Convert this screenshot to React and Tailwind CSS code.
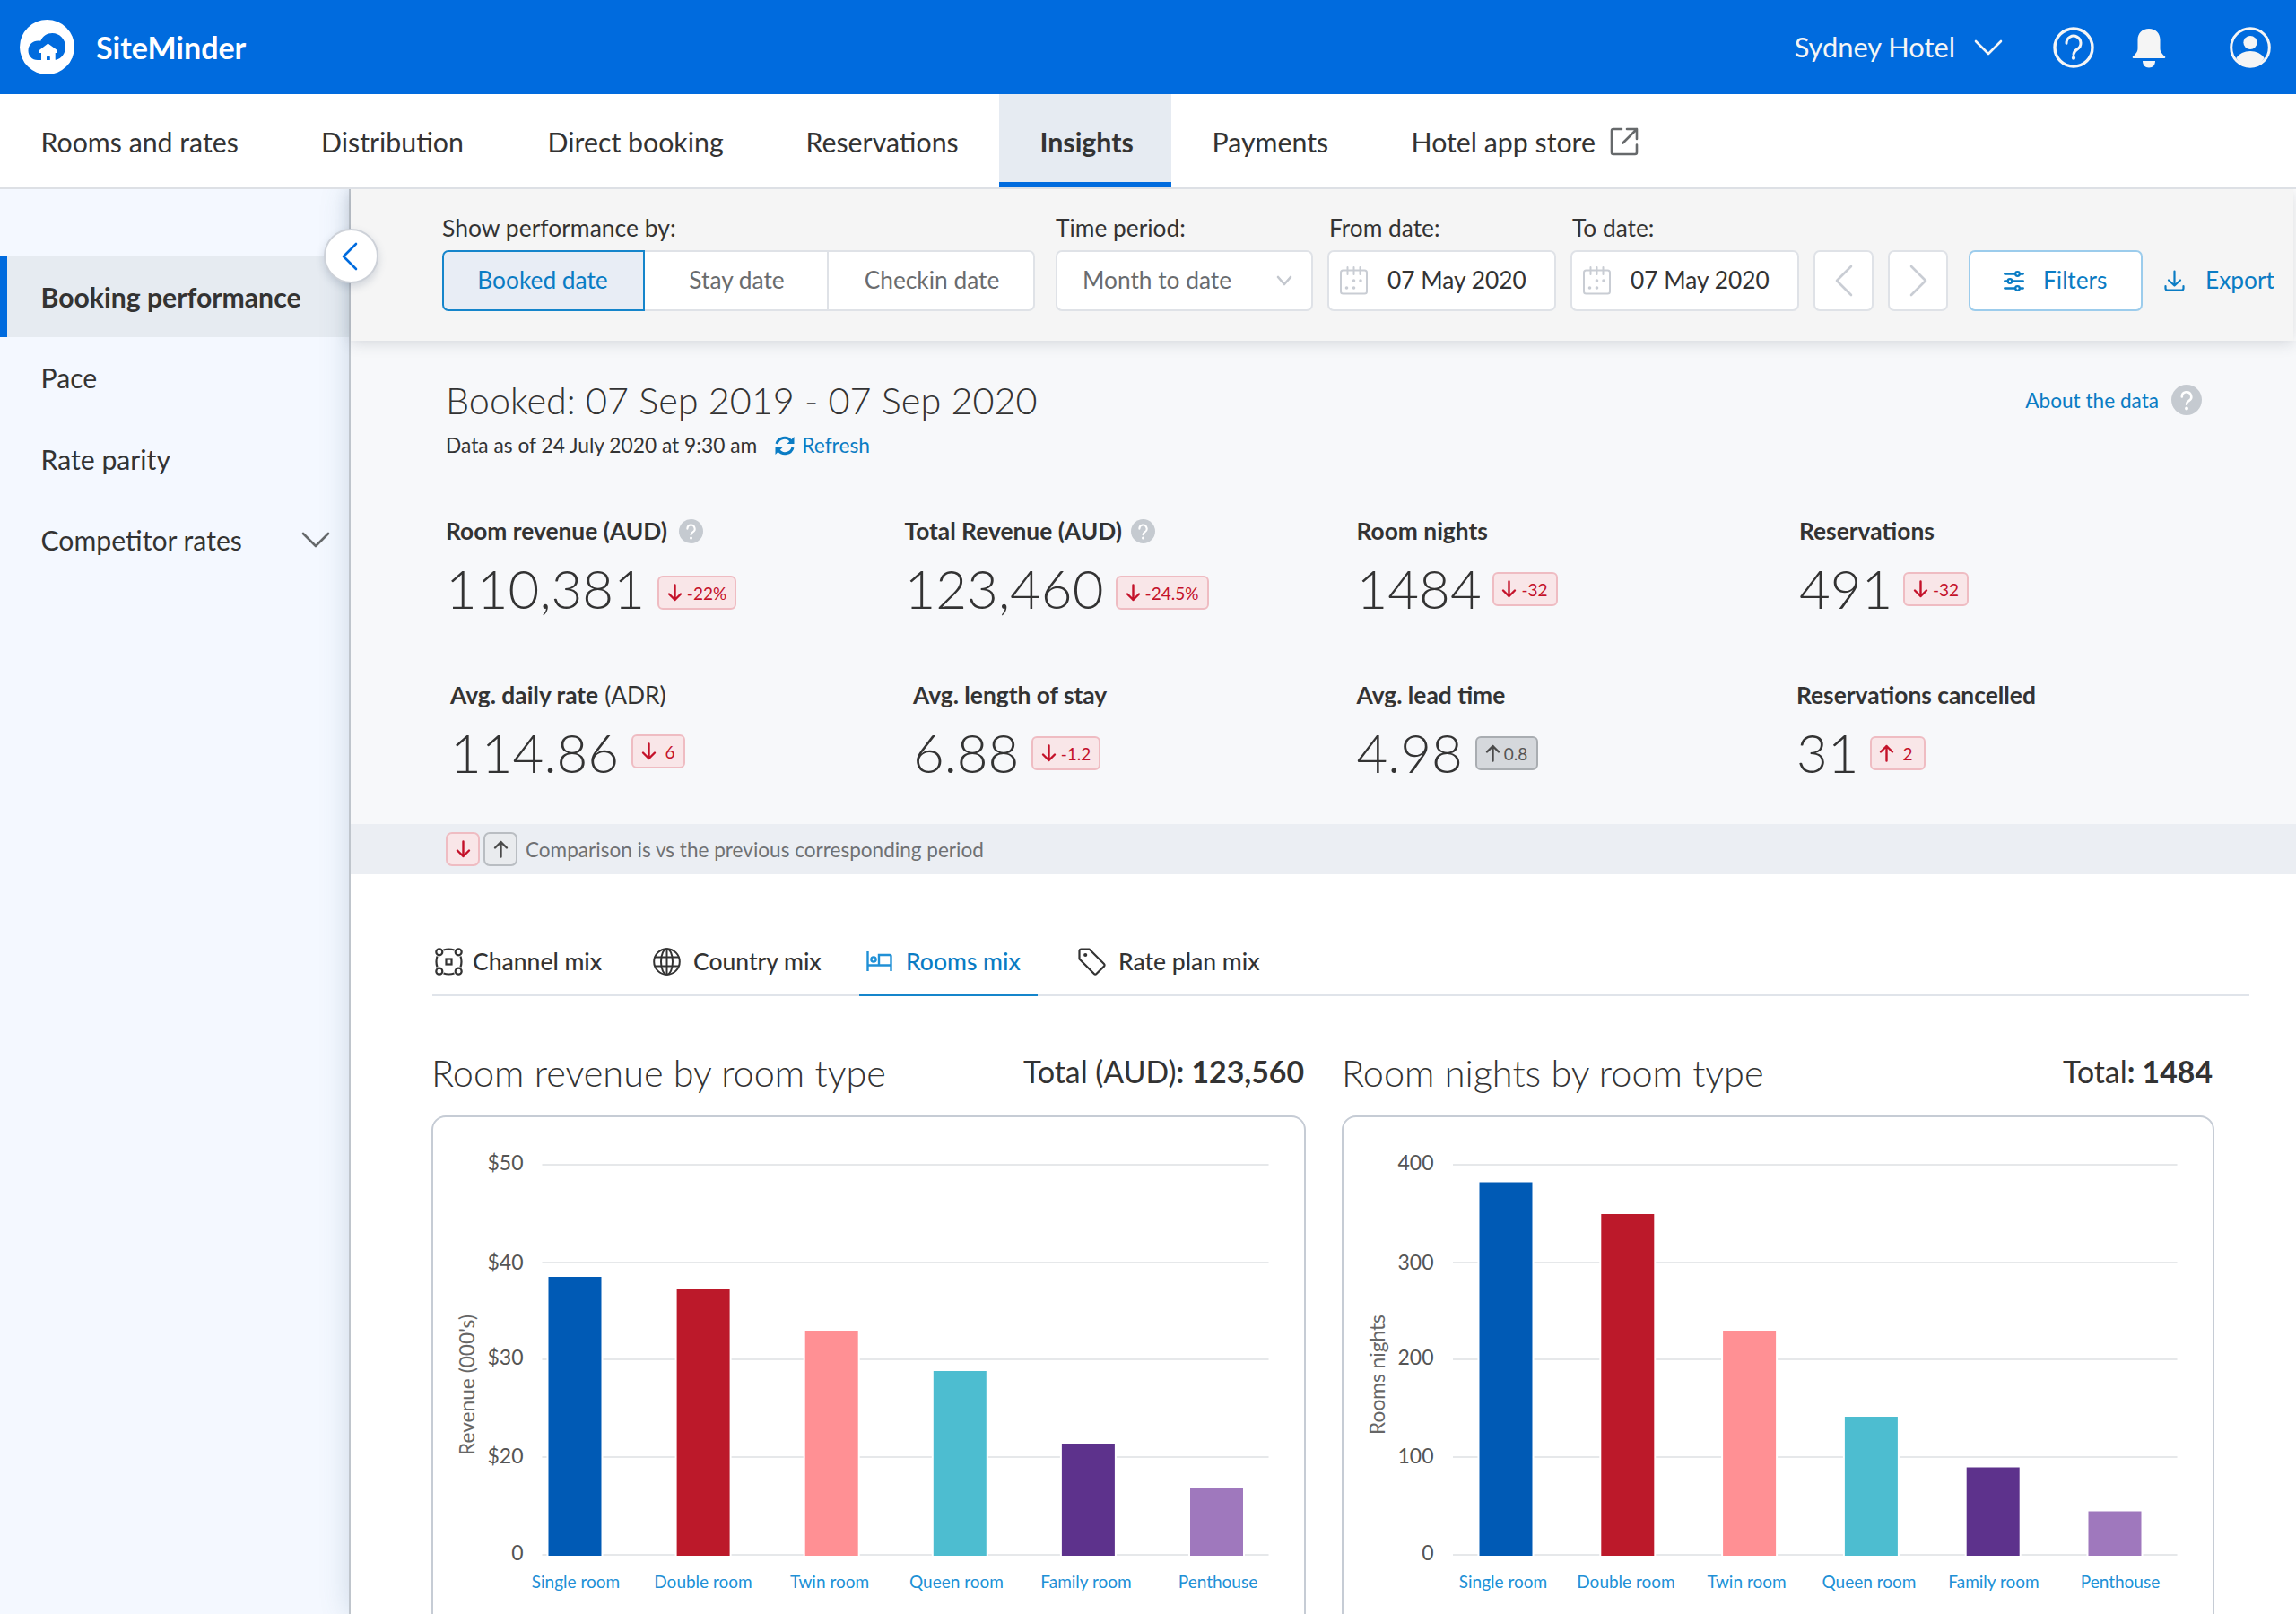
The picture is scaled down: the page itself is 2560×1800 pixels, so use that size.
import React, { useState } from "react";
import clsx from "clsx";

const navItems = [
  { name: "Rooms and rates", width: "w-[312.5px]" },
  { name: "Distribution", width: "w-[252.5px]" },
  { name: "Direct booking", width: "w-[288px]" },
  { name: "Reservations", width: "w-[261px]" },
  { name: "Insights", width: "w-[192px]" },
  { name: "Payments", width: "w-[222px]" },
  { name: "Hotel app store", width: "w-[300px]", external: true },
];

const sideItems = [
  { name: "Booking performance" },
  { name: "Pace" },
  { name: "Rate parity" },
  { name: "Competitor rates", children: true },
];

const topStats = [
  { label: "Room revenue (AUD)", help: "ml-[13px]", value: "110,381", valueWidth: "w-[236px]", change: "-22%", dir: "down", badge: "w-[88px] mt-[10px] gap-[5px]" },
  { label: "Total Revenue (AUD)", help: "ml-[10px]", value: "123,460", valueWidth: "w-[235px]", change: "-24.5%", dir: "down", badge: "w-[104px] mt-[10px] gap-[5px]" },
  { label: "Room nights", value: "1484", valueWidth: "w-[151px]", change: "-32", dir: "down", badge: "w-[73px] mt-[2px] gap-[5px]" },
  { label: "Reservations", value: "491", valueWidth: "w-[116px]", change: "-32", dir: "down", badge: "w-[73px] mt-[2px] gap-[5px]" },
];

const bottomStats = [
  { label: "Avg. daily rate", note: "(ADR)", value: "114.86", valueWidth: "w-[202px]", change: "6", dir: "down", badge: "w-[60px] -mt-[2px] gap-[9px]" },
  { label: "Avg. length of stay", value: "6.88", valueWidth: "w-[132px]", change: "-1.2", dir: "down", badge: "w-[77px] mt-[2px] gap-[5px]" },
  { label: "Avg. lead time", value: "4.98", valueWidth: "w-[132px]", change: "0.8", dir: "up", grey: true, badge: "w-[70px] mt-[2px] gap-[4px]" },
  { label: "Reservations cancelled", value: "31", valueWidth: "w-[82px]", change: "2", dir: "up", badge: "w-[62px] mt-[2px] pr-[4px] gap-[9px]" },
];

const barColors = ["#005ab5", "#bc192a", "#ff9094", "#4dbdd0", "#5d328c", "#9f78bd"];
const roomTypes = ["Single room", "Double room", "Twin room", "Queen room", "Family room", "Penthouse"];

// x values are relative to the left edge of the card, y values to its top
const gridY = [52, 161, 269, 378, 487];
const tickY = [59, 170, 276, 386, 494];
const revenueChart = {
  unit: "Revenue (000's)",
  unitY: 298.5,
  ticks: ["$50", "$40", "$30", "$20", "0"],
  line: [121.5, 931.5],
  first: 128.5,
  step: 143.1,
  tops: [178, 191, 238, 283, 364, 413.5],
  labelX: [159, 301, 442, 583.5, 728, 875],
};
const nightsChart = {
  unit: "Rooms nights",
  unitY: 287,
  ticks: ["400", "300", "200", "100", "0"],
  line: [122, 929.5],
  first: 151.5,
  step: 135.8,
  tops: [72.5, 108, 238, 334, 390.5, 439.5],
  labelX: [178, 315, 449.5, 586, 725, 866],
};

const Logo = () => (
  <svg width="61" height="61" viewBox="0 0 61 61">
    <circle cx="30.5" cy="30.5" r="30.5" fill="#fff" />
    <path
      d="M20 45C13.500 45 9.500 40 9.500 34.500C9.500 28 14.500 23.500 20.500 23.500C21.500 23.500 22.500 23.500 23.300 23.700C25.500 18.300 30.500 15 36.200 15C44.500 15 51 21.800 51 30.200C51 37.500 46.500 43.300 40.500 44.700L39.700 44.700L39.700 37H41.800V34L31.500 26.500L21.800 34V37H24L24 45Z"
      fill="#006bde"
    />
    <path d="M30 45V41.800a1.900 1.900 0 0 1 3.800 0V45Z" fill="#006bde" />
  </svg>
);

const Chevron = ({ width, height, d, stroke, className }) => (
  <svg width={width} height={height} className={className} fill="none" stroke={stroke} strokeWidth="2.6" strokeLinecap="round" strokeLinejoin="round">
    <path d={d} />
  </svg>
);

const HelpCircle = ({ size }) => (
  <svg width={size} height={size} viewBox="0 0 34 34">
    <circle cx="17" cy="17" r="17" fill="#c5cad0" />
    <path d="M11.800 13.500a5.200 5.200 0 1 1 7.700 4.500c-1.700 1-2.500 1.900-2.500 3.700" fill="none" stroke="#fff" strokeWidth="2.6" strokeLinecap="round" />
    <circle cx="17" cy="26.5" r="1.9" fill="#fff" />
  </svg>
);

const Arrow = ({ dir, color }) => (
  <svg width="17" height="20" viewBox="0 0 17 20" fill="none" stroke={color} strokeWidth="2.4" strokeLinecap="round" strokeLinejoin="round">
    {dir === "down" ? <path d="M8.500 1.500V18M2 11.500L8.500 18L15 11.500" /> : <path d="M8.500 18.500V2M2 8.500L8.500 2L15 8.500" />}
  </svg>
);

const Calendar = () => (
  <svg width="31" height="32" viewBox="0 0 31 32" fill="none" stroke="#c9cdd4" strokeWidth="2">
    <rect x="1" y="4.5" width="29" height="26" rx="2.5" />
    <path d="M8.500 1v8M15.500 1v8M22.500 1v8" strokeLinecap="round" />
    <g fill="#c9cdd4" stroke="none">
      <circle cx="15.5" cy="16" r="1.8" />
      <circle cx="23" cy="16" r="1.8" />
      <circle cx="7.5" cy="24" r="1.8" />
      <circle cx="15.5" cy="24" r="1.8" />
    </g>
  </svg>
);

const Header = () => (
  <header className="h-[105px] bg-[#006bde] text-white flex items-center justify-between pl-[22px] pr-[28px]">
    <div className="flex items-center gap-[24px]">
      <Logo />
      <span className="text-[34px] font-bold leading-none">SiteMinder</span>
    </div>
    <div className="flex items-center text-[#f5f5f5]">
      <span className="text-[30.8px] leading-none pt-[2px]">Sydney Hotel</span>
      <Chevron width="32" height="18" d="M2 2L16 16L30 2" stroke="#f5f5f5" className="ml-[21px]" />
      <svg width="46" height="46" viewBox="0 0 46 46" className="ml-[56px]" fill="none" stroke="#f5f5f5">
        <circle cx="23" cy="23" r="21" strokeWidth="3.4" />
        <path d="M15 18.200a8 8 0 1 1 12.200 6.700c-2.900 1.800-4.200 3.200-4.200 5.800" strokeWidth="3" strokeLinecap="round" />
        <circle cx="23" cy="34.7" r="2.1" fill="#f5f5f5" stroke="none" />
      </svg>
      <svg width="38" height="46" viewBox="0 0 38 46" className="ml-[42px]" fill="#f5f5f5">
        <path d="M19 2C11.500 2 6.500 7 6.500 14.500V24C6.500 28 4 30.300 1 33.300C.300 34 .700 35 1.700 35H36.300C37.300 35 37.700 34 37 33.300C34 30.300 31.500 28 31.500 24V14.500C31.500 7 26.500 2 19 2Z" />
        <path d="M12 38H26C26 42.500 23.500 45.500 19 45.500S12 42.500 12 38Z" />
      </svg>
      <svg width="46" height="46" viewBox="0 0 46 46" className="ml-[71px]">
        <circle cx="23" cy="23" r="21.3" fill="none" stroke="#f5f5f5" strokeWidth="3" />
        <circle cx="23" cy="17.5" r="7.6" fill="#f5f5f5" />
        <path d="M7.500 34.500C10.500 30 16.500 27 23 27S35.500 30 38.500 34.500C36 40.500 30 44.500 23 44.500S10 40.500 7.500 34.500Z" fill="#f5f5f5" />
      </svg>
    </div>
  </header>
);

const Navbar = () => {
  const [active, setActive] = useState("Insights");

  return (
    <nav className="relative z-20 h-[106px] bg-white border-b-2 border-[#dde0e5] flex">
      {navItems.map((i) => (
        <div
          key={i.name}
          onClick={() => setActive(i.name)}
          className={clsx(
            "h-full shrink-0 pl-[45.5px] pt-[2px] flex items-center text-[30.3px] leading-none cursor-pointer whitespace-nowrap",
            i.width,
            active === i.name && "bg-[#e6ebf2] font-bold shadow-[inset_0_-6px_0_#006bde]"
          )}
        >
          {i.name}
          {i.external && (
            <svg width="32" height="32" viewBox="0 0 32 32" className="ml-[16px]" fill="none" stroke="#66696b" strokeWidth="2.6" strokeLinecap="round" strokeLinejoin="round">
              <path d="M13 2H4a2 2 0 0 0-2 2v24a2 2 0 0 0 2 2h24a2 2 0 0 0 2-2V19.500" />
              <path d="M19 2H30V13M30 2L14.500 17.500" />
            </svg>
          )}
        </div>
      ))}
    </nav>
  );
};

const Sidebar = () => (
  <aside className="w-[390px] shrink-0 bg-[#f4f8ff] pt-[75px] text-[30.2px]">
    {sideItems.map((i, index) => (
      <div
        key={i.name}
        className={clsx(
          "h-[90.4px] pl-[45.5px] pr-[22px] flex items-center justify-between leading-none whitespace-nowrap",
          index === 0 && "bg-[#e6ebf1] font-bold shadow-[inset_8px_0_0_#006bde]"
        )}
      >
        {i.name}
        {i.children && <Chevron width="32" height="18" d="M2 2L16 16L30 2" stroke="#66696b" />}
      </div>
    ))}
  </aside>
);

const DateField = ({ label, value }) => (
  <div className="w-[255px] mr-4">
    <div className="h-[68px] pt-[28.5px] leading-[28px] pl-[2px]">{label}</div>
    <div className="h-[68px] rounded-[7px] border-2 border-[#dfe2e7] bg-white flex items-center pl-[12px] text-[#333]">
      <Calendar />
      <span className="ml-[22px] pb-px">{value}</span>
    </div>
  </div>
);

const Toolbar = () => (
  <div className="relative z-[5] h-[169px] w-[2166px] bg-[#f5f5f5] pl-[102px] flex text-[26.3px] whitespace-nowrap shadow-[0_2px_16px_rgba(60,70,90,0.2)]">
    <div className="w-[661px] mr-[23px]">
      <div className="h-[68px] pt-[28.5px] leading-[28px] text-[26.5px]">Show performance by:</div>
      <div className="h-[68px] flex text-[#6a6c6e]">
        <div className="w-[226px] rounded-l-[7px] border-2 border-[#1585cb] bg-[#e8edf5] text-[#0a7cc4] flex items-center justify-center pb-px pr-[2px]">Booked date</div>
        <div className="w-[205px] border-y-2 border-r-2 border-[#dfe2e7] bg-white flex items-center justify-center pb-px pl-[2px]">Stay date</div>
        <div className="w-[230px] rounded-r-[7px] border-y-2 border-r-2 border-[#dfe2e7] bg-white flex items-center justify-center pb-px pl-[2px]">Checkin date</div>
      </div>
    </div>
    <div className="w-[287px] mr-4">
      <div className="h-[68px] pt-[28.5px] leading-[28px]">Time period:</div>
      <div className="h-[68px] rounded-[7px] border-2 border-[#dfe2e7] bg-white text-[#6a6c6e] flex items-center justify-between pl-[28px] pr-[21px]">
        <span className="pb-px">Month to date</span>
        <Chevron width="18" height="12" d="M2 2L9 10L16 2" stroke="#c3c7ce" />
      </div>
    </div>
    <DateField label="From date:" value="07 May 2020" />
    <DateField label="To date:" value="07 May 2020" />
    <div className="mt-[68px] h-[68px] flex items-center">
      <div className="w-[67px] h-full mr-4 rounded-[7px] border-2 border-[#dfe2e7] bg-white flex items-center justify-center">
        <Chevron width="20" height="36" d="M18 2L2 18L18 34" stroke="#c9cdd4" />
      </div>
      <div className="w-[67px] h-full mr-[23px] rounded-[7px] border-2 border-[#dfe2e7] bg-white flex items-center justify-center">
        <Chevron width="20" height="36" d="M2 2L18 18L2 34" stroke="#c9cdd4" />
      </div>
      <div className="w-[194px] h-full rounded-[7px] border-2 border-[#9cccec] bg-white text-[#0a7cc4] flex items-center pl-[37px]">
        <svg width="23" height="23" viewBox="0 0 23 23" fill="none" stroke="#0a7cc4" strokeWidth="2.3" strokeLinecap="round">
          <path d="M1.200 3.500H13M18 3.500h3.800M1.200 11.500H4.500M9.500 11.500h12.300M1.200 19.500H13M18 19.500h3.800" />
          <circle cx="15.5" cy="3.5" r="2.3" />
          <circle cx="7" cy="11.5" r="2.3" />
          <circle cx="15.5" cy="19.5" r="2.3" />
        </svg>
        <span className="ml-[21px] pb-px">Filters</span>
      </div>
      <div className="ml-[24px] text-[#0a7cc4] flex items-center">
        <svg width="23" height="24" viewBox="0 0 23 24" fill="none" stroke="#0a7cc4" strokeWidth="2.2" strokeLinecap="round" strokeLinejoin="round">
          <path d="M11.500 1.500V17.500M5 11.500L11.500 17.500L18 11.500M1.500 18v2.500a2 2 0 0 0 2 2h16a2 2 0 0 0 2-2V18" />
        </svg>
        <span className="ml-[23px] pb-px">Export</span>
      </div>
    </div>
  </div>
);

const Stat = ({ data }) => (
  <div className="whitespace-nowrap">
    <div className="h-[28px] flex items-center text-[26.35px] leading-[28px] font-bold">
      {data.label}
      {data.note && <span className="font-normal ml-[7px]">{data.note}</span>}
      {data.help && (
        <span className={data.help}>
          <HelpCircle size={27} />
        </span>
      )}
    </div>
    <div className="mt-[20px] h-[60px] flex items-center">
      <span className={clsx("text-[60px] leading-[60px] font-light", data.valueWidth)}>{data.value}</span>
      <span
        className={clsx(
          "h-[38px] rounded-[6px] border-2 flex items-center justify-center text-[19px] leading-none",
          data.badge,
          data.grey ? "border-[#a9adb1] bg-[#d5d8dc] text-[#555]" : "border-[#efbcc2] bg-[#f9e6e8] text-[#c4122a]"
        )}
      >
        <Arrow dir={data.dir} color={data.grey ? "#4a4a4a" : "#c4122a"} />
        {data.change}
      </span>
    </div>
  </div>
);

const Summary = () => (
  <section className="h-[539px] bg-[#f7f8fa] pt-[40px]">
    <div className="pl-[106px] pr-[105px] flex justify-between">
      <div>
        <h1 className="text-[41.4px] leading-[52px] font-light">Booked: 07 Sep 2019 - 07 Sep 2020</h1>
        <div className="mt-[11px] flex items-center text-[22.75px] leading-[27px]">
          Data as of 24 July 2020 at 9:30 am
          <svg width="22" height="22" viewBox="0 0 22 22" className="ml-[20px]" fill="none" stroke="#0a7cc4" strokeWidth="3">
            <path d="M2 9A9 9 0 0 1 18 6M20 13A9 9 0 0 1 4 16" />
            <path d="M21.500 1V9H13.500ZM.500 21V13H8.500Z" fill="#0a7cc4" stroke="none" />
          </svg>
          <span className="ml-[8px] text-[#0a7cc4]">Refresh</span>
        </div>
      </div>
      <div className="h-[52px] flex items-center text-[22.6px] text-[#0a7cc4]">
        <span className="mr-[14px] pt-[2px]">About the data</span>
        <HelpCircle size={34} />
      </div>
    </div>
    <div className="mt-[68px] pl-[106px] grid grid-cols-[511.5px_504px_493.5px_1fr]">
      {topStats.map((s) => (
        <Stat key={s.label} data={s} />
      ))}
    </div>
    <div className="mt-[75px] pl-[111px] grid grid-cols-[516px_494.5px_490.5px_1fr]">
      {bottomStats.map((s) => (
        <Stat key={s.label} data={s} />
      ))}
    </div>
  </section>
);

const Comparison = () => (
  <div className="h-[56px] bg-[#ebeef3] pl-[106px] flex items-center text-[22.55px] text-[#6f7173]">
    <span className="size-[38px] rounded-[7px] border-2 border-[#efbcc2] bg-[#f9e6e8] flex items-center justify-center">
      <Arrow dir="down" color="#c4122a" />
    </span>
    <span className="ml-[4px] size-[38px] rounded-[7px] border-2 border-[#b9bdc2] bg-[#e9ebee] flex items-center justify-center">
      <Arrow dir="up" color="#4a4a4a" />
    </span>
    <span className="ml-[9px] pt-px">Comparison is vs the previous corresponding period</span>
  </div>
);

const Tabs = () => (
  <div className="mt-[94px] ml-[91px] mr-[52px] h-[42px] border-b-2 border-[#e0e4ea] flex text-[26.5px] leading-[30px] font-medium whitespace-nowrap">
    <div className="w-[246px] pl-[3px] -mt-[12px] flex items-center gap-[11px] h-[30px]">
      <svg width="31" height="31" viewBox="0 0 31 31" fill="none" stroke="#333" strokeWidth="2.2">
        <circle cx="4.8" cy="4.8" r="3.5" />
        <circle cx="26.2" cy="4.8" r="3.5" />
        <circle cx="4.8" cy="26.2" r="3.5" />
        <circle cx="26.2" cy="26.2" r="3.5" />
        <path d="M9.500 2.500Q15.500 .500 21.500 2.500M9.500 28.500Q15.500 30.500 21.500 28.500M2.500 9.500Q.500 15.500 2.500 21.500M28.500 9.500Q30.500 15.500 28.500 21.500" />
        <rect x="12.5" y="12.5" width="6" height="6" />
      </svg>
      Channel mix
    </div>
    <div className="w-[230px] -mt-[12px] flex items-center gap-[14px] h-[30px]">
      <svg width="31" height="31" viewBox="0 0 31 31" fill="none" stroke="#333" strokeWidth="2">
        <circle cx="15.5" cy="15.5" r="14.3" />
        <ellipse cx="15.5" cy="15.5" rx="6.5" ry="14.3" />
        <path d="M15.500 1V30M2.500 10.500H28.500M2.500 20.500H28.500" />
      </svg>
      Country mix
    </div>
    <div className="w-[199px] h-[42px] shadow-[inset_0_-3px_0_#1585cb] text-[#0a7cc4]">
      <div className="pl-[8px] -mt-[12px] flex items-center gap-[15px] h-[30px]">
        <svg width="29" height="22" viewBox="0 0 29 22" fill="none" stroke="#2090d6" strokeWidth="2.4">
          <path d="M1.500 0V22M27.500 22V5.500a1.500 1.500 0 0 0-1.500-1.500H14V15.500M1.500 15.500H27.500" />
          <circle cx="8" cy="9" r="2.6" />
        </svg>
        Rooms mix
      </div>
    </div>
    <div className="pl-[45px] -mt-[12px] flex items-center gap-[14px] h-[30px]">
      <svg width="31" height="31" viewBox="0 0 31 31" fill="none" stroke="#333" strokeWidth="2.2" strokeLinejoin="round">
        <path d="M1.500 3.500a2 2 0 0 1 2-2H12.500L29 18a1.800 1.800 0 0 1 0 2.600L20.500 29a1.800 1.800 0 0 1-2.600 0L1.500 12.500Z" />
        <circle cx="8.2" cy="8" r="1" fill="#333" />
      </svg>
      Rate plan mix
    </div>
  </div>
);

const BarChart = ({ data }) => (
  <svg width="968" height="550" className="block overflow-visible">
    {gridY.map((y, i) => (
      <g key={y}>
        <rect x={data.line[0]} y={y} width={data.line[1] - data.line[0]} height="2" fill="#e6e8ea" />
        <text x="100.5" y={tickY[i]} textAnchor="end" fontSize="23" fill="#555">
          {data.ticks[i]}
        </text>
      </g>
    ))}
    <text transform={`translate(46 ${data.unitY}) rotate(-90)`} textAnchor="middle" fontSize="22.7" fill="#666">
      {data.unit}
    </text>
    {data.tops.map((top, i) => (
      <g key={roomTypes[i]}>
        <rect x={data.first + i * data.step} y={top} width="59" height={489 - top} fill={barColors[i]} stroke="#fff" strokeWidth="4" paintOrder="stroke" />
        <text x={data.labelX[i]} y="525" textAnchor="middle" fontSize="19" fill="#2090d6">
          {roomTypes[i]}
        </text>
      </g>
    ))}
  </svg>
);

const ChartCard = ({ title, totalLabel, total, data, width }) => (
  <div className={width}>
    <div className="h-[73px] flex items-center justify-between pt-px pr-[2px]">
      <h2 className="text-[41.45px] font-light leading-[50px]">{title}</h2>
      <p className="text-[33.8px] leading-[50px] pb-[2px]">
        {totalLabel}
        <b>: {total}</b>
      </p>
    </div>
    <div className="h-[640px] mt-[12px] rounded-[16px] border-2 border-[#c6ccd5] bg-white">
      <BarChart data={data} />
    </div>
  </div>
);

const App = () => {
  const [open, setOpen] = useState(true);

  return (
    <div className="w-[2560px] h-[1800px] overflow-hidden bg-white text-[#333] font-['Lato',sans-serif] flex flex-col">
      <Header />
      <Navbar />
      <div className="flex h-[1589px]">
        <Sidebar />
        <main className="relative flex-1 bg-white border-l-2 border-[#bfc5cc] -ml-px shadow-[0_0_30px_rgba(70,110,140,0.22)]">
          <button
            onClick={() => setOpen(!open)}
            className="absolute z-10 -left-[30px] top-[44px] size-[61px] rounded-full border-2 border-[#cdd1d8] bg-white flex items-center justify-center shadow-[0_4px_10px_rgba(60,80,110,0.2)]"
          >
            <Chevron width="18" height="32" d="M16 2L2 16L16 30" stroke="#006bde" className="-ml-[3px]" />
          </button>
          <Toolbar />
          <Summary />
          <Comparison />
          <Tabs />
          <div className="ml-[90px] mt-[48px] flex gap-[40px]">
            <ChartCard title="Room revenue by room type" totalLabel="Total (AUD)" total="123,560" data={revenueChart} width="w-[975px]" />
            <ChartCard title="Room nights by room type" totalLabel="Total" total="1484" data={nightsChart} width="w-[973px]" />
          </div>
        </main>
      </div>
    </div>
  );
};

export default App;
